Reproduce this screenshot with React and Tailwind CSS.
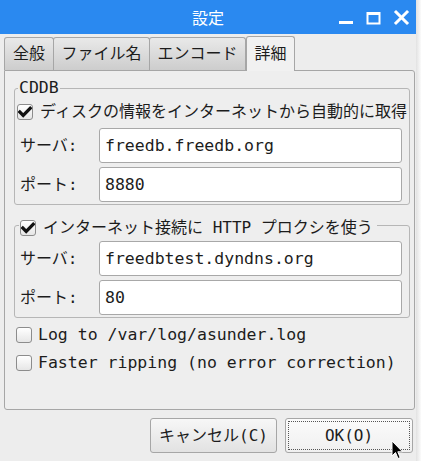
import React from "react";

function CheckBox({ checked }) {
  return (
    <div className="w-[16px] h-[16px] shrink-0 rounded-[3px] border border-[#8c8c8c] bg-gradient-to-b from-[#ffffff] to-[#e6e6e6] flex items-center justify-center">
      {checked && (
        <svg width="14" height="14" viewBox="0 0 14 14">
          <path d="M1.8 7 L5.2 10.4 L12.2 3.2" fill="none" stroke="#111" strokeWidth="3.2" strokeLinecap="square" />
        </svg>
      )}
    </div>
  );
}

function Field({ label, value, top }) {
  return (
    <div className={`flex items-center pl-[5px] ${top}`}>
      <div className="w-[79px] text-[16px] leading-[20px]">{label}</div>
      <div className="w-[303px] h-[35px] rounded-[3px] border border-[#a8a8a8] bg-white flex items-center pl-[5px] text-[16.5px] leading-[20px]">
        {value}
      </div>
    </div>
  );
}

function Tab({ label, w, active }) {
  if (active) {
    return (
      <div
        className={`${w} h-[35px] -mb-px z-10 rounded-t-[3px] border border-b-0 border-[#a6a6a6] bg-[#f1f1f1] flex items-center justify-center text-[16px] leading-[20px]`}
      >
        {label}
      </div>
    );
  }
  return (
    <div
      className={`${w} h-[33px] rounded-t-[3px] border border-b-0 border-[#a6a6a6] bg-gradient-to-b from-[#e9e9e9] to-[#cdcdcd] flex items-center justify-center text-[16px] leading-[20px] -ml-px first:ml-0`}
    >
      {label}
    </div>
  );
}

export default function App() {
  return (
    <div className="w-[421px] h-[461px] flex bg-white overflow-hidden relative text-[#1c1c1c] font-[family-name:'DejaVu_Sans_Mono','Noto_Sans_CJK_JP',monospace]">
      <div className="w-[416px] h-full flex flex-col bg-[#ededed]">
        {/* title bar */}
        <div className="h-[34px] shrink-0 bg-[#2a89f0] relative flex items-center justify-center">
          <span className="text-white text-[16px] leading-[20px] font-[family-name:'Noto_Sans_CJK_JP',sans-serif]">設定</span>
          <div className="absolute right-[3px] top-0 h-[34px] flex items-center">
            <svg width="80" height="34" viewBox="0 0 80 34">
              <rect x="6" y="21" width="14" height="3" fill="#fff" />
              <rect x="34.5" y="13" width="12" height="10.5" fill="none" stroke="#fff" strokeWidth="2" />
              <rect x="34" y="12" width="13" height="3" fill="#fff" />
              <path d="M63 12 L74 23 M74 12 L63 23" stroke="#fff" strokeWidth="3" strokeLinecap="square" />
            </svg>
          </div>
        </div>

        {/* body */}
        <div className="flex-1 flex flex-col pl-[4px]">
          <div className="h-[36px] flex items-end">
            <Tab label="全般" w="w-[50px]" />
            <Tab label="ファイル名" w="w-[97px]" />
            <Tab label="エンコード" w="w-[97px]" />
            <Tab label="詳細" w="w-[49px]" active />
          </div>

          <div className="w-[411px] h-[340px] border border-[#a6a6a6] rounded-b-[3px] rounded-tr-[3px] bg-[#eeeeee] pl-[9px] flex flex-col">
            {/* CDDB group */}
            <fieldset className="mt-[7px] w-[396px] border border-[#b6b6b6] rounded-[3px] pb-[2px]">
              <legend className="ml-[3px] px-[1px] text-[16.5px] leading-[20px]">CDDB</legend>
              <div className="h-[28px] flex items-center pl-[2px] gap-[7px] text-[16px] leading-[20px] whitespace-nowrap">
                <CheckBox checked />
                <span>ディスクの情報をインターネットから自動的に取得</span>
              </div>
              <Field label="サーバ:" value="freedb.freedb.org" top="mt-[2px]" />
              <Field label="ポート:" value="8880" top="mt-[4px]" />
            </fieldset>

            {/* proxy group */}
            <fieldset className="mt-[10px] w-[396px] border border-[#b6b6b6] rounded-[3px] pb-[2px]">
              <legend className="ml-[4px] px-[1px] h-[20px]">
                <div className="mt-[3px] h-[20px] flex items-center gap-[7px] text-[16px] leading-[20px] whitespace-nowrap pr-[3px]">
                  <CheckBox checked />
                  <span>インターネット接続に HTTP プロクシを使う</span>
                </div>
              </legend>
              <Field label="サーバ:" value="freedbtest.dyndns.org" top="mt-[6px]" />
              <Field label="ポート:" value="80" top="mt-[4px]" />
            </fieldset>

            <div className="mt-[3px] h-[28px] flex items-center ml-[2px] gap-[6px] text-[16.5px] leading-[20px] whitespace-nowrap">
              <CheckBox />
              <span>Log to /var/log/asunder.log</span>
            </div>
            <div className="h-[28px] flex items-center ml-[2px] gap-[6px] text-[16.5px] leading-[20px] whitespace-nowrap">
              <CheckBox />
              <span>Faster ripping (no error correction)</span>
            </div>
          </div>

          <div className="mt-[8px] w-[411px] flex justify-end gap-[8px] pr-[2px]">
            <div className="w-[127px] h-[35px] rounded-[3px] border border-[#a6a6a6] bg-gradient-to-b from-[#f7f7f7] to-[#e2e2e2] flex items-center justify-center text-[16px] leading-[20px]">
              キャンセル(C)
            </div>
            <div className="w-[128px] h-[35px] rounded-[3px] border border-[#a6a6a6] bg-gradient-to-b from-[#fbfbfb] to-[#f0f0f0] p-[2px]">
              <div className="w-full h-full border border-dotted border-[#555] flex items-center justify-center text-[16px] leading-[20px]">
                OK(O)
              </div>
            </div>
          </div>
        </div>
      </div>
      <div className="flex-1 bg-gradient-to-r from-[#e2e2e2] to-[#fbfbfb]" />

      {/* mouse cursor */}
      <svg className="absolute left-[391px] top-[440px]" width="14" height="21" viewBox="0 0 14 21">
        <path d="M1 1 L1 16 L4.5 12.5 L7 18.5 L9.2 17.6 L6.8 11.8 L11.5 11.8 Z" fill="#000" stroke="#fff" strokeWidth="1" strokeLinejoin="round" />
      </svg>
    </div>
  );
}
